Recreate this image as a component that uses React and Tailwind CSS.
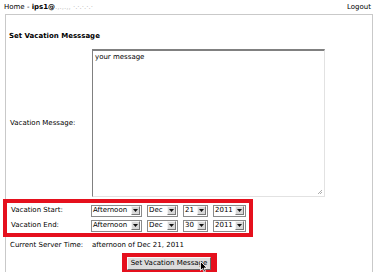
import React from 'react';

const font = { fontFamily: '"DejaVu Sans", Verdana, sans-serif' };

function FakeSelect({ value, width }) {
  return (
    <div className={`flex items-center h-[12px] border border-[#8a8a8a] bg-white ${width}`}>
      <span className="flex-1 pl-[1px] text-[7px] leading-none text-black">{value}</span>
      <span className="w-[9px] h-[9px] mr-[1px] bg-[#d8d8d8] border border-[#f4f4f4] border-r-[#777] border-b-[#777] flex items-center justify-center">
        <svg width="5" height="3" viewBox="0 0 5 3"><path d="M0 0h5L2.5 3z" fill="#111" /></svg>
      </span>
    </div>
  );
}

function DateRow({ label, day }) {
  return (
    <div className="flex items-center h-[18px]">
      <span className="w-[84px] pl-[4px] text-[7px] text-black">{label}</span>
      <div className="flex items-center gap-[5px]">
        <FakeSelect value="Afternoon" width="w-[51px]" />
        <FakeSelect value="Dec" width="w-[31px]" />
        <FakeSelect value={day} width="w-[25px]" />
        <FakeSelect value="2011" width="w-[33px]" />
      </div>
    </div>
  );
}

export default function App() {
  return (
    <div className="w-[382px] h-[272px] overflow-hidden bg-white text-black" style={font}>
      {/* top bar */}
      <div className="flex justify-between items-center h-[14px] px-[4px] text-[7px]">
        <span>
          Home - <b>ips1@</b><span className="text-[#bbb]">.,.,.,, ·.·.·.·.·</span>
        </span>
        <span className="mr-[7px]">Logout</span>
      </div>

      <div className="ml-[5px] mr-[9px] h-[260px] border border-b-0 border-[#c9c9c9]">
        <div className="pl-[3px] pt-[16px] h-[34px] text-[7px] font-bold">Set Vacation Messsage</div>

        <div className="flex items-center">
          <span className="w-[86px] pl-[4px] text-[7px]">Vacation Message:</span>
          <div className="relative w-[233px] h-[148px] bg-white border border-[#e2e2e2] border-t-[#808080] border-l-[#808080] border-t-[2px]">
            <span className="absolute left-[2px] top-[1px] text-[7px]">your message</span>
            <svg className="absolute right-[1px] bottom-[1px]" width="6" height="6" viewBox="0 0 6 6">
              <path d="M5 1L1 5M5 3L3 5" stroke="#999" strokeWidth="0.8" />
            </svg>
          </div>
        </div>

        <div className="ml-[-3px] mt-[2px] w-[250px] h-[38px] border-[4px] border-[#e5101d] flex flex-col justify-center">
          <DateRow label="Vacation Start:" day="21" />
          <DateRow label="Vacation End:" day="30" />
        </div>

        <div className="flex items-center h-[14px] mt-[1px] text-[7px]">
          <span className="w-[86px] pl-[4px]">Current Server Time:</span>
          <span>afternoon of Dec 21, 2011</span>
        </div>

        <div className="relative ml-[116px] mt-[1px] w-[95px] h-[22px] bg-[#e5101d] pt-[4px] pl-[5px]">
          <div className="w-[84px] h-[13px] bg-[#dcdcdc] border border-[#f8f8f8] border-r-[#666] border-b-[#666] flex items-center justify-center text-[7px]">
            Set Vacation Message
          </div>
          <svg className="absolute left-[78px] top-[8px]" width="8" height="12" viewBox="0 0 8 12">
            <path d="M0.5 0.5v9l2-2 1.5 3.5 1.5-.6-1.5-3.4h3z" fill="#000" stroke="#fff" strokeWidth="0.8" />
          </svg>
        </div>
      </div>
    </div>
  );
}
